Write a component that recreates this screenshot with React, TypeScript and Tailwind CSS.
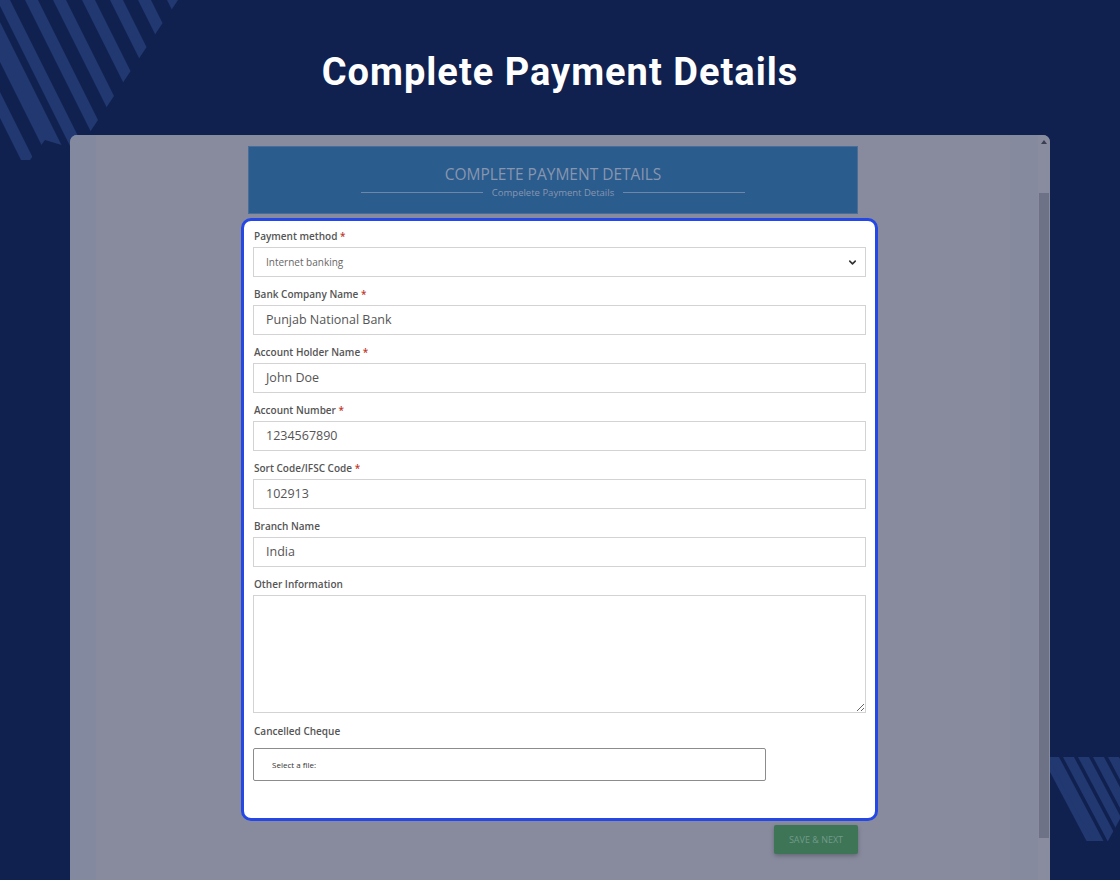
import React from "react";
import { ChevronDown } from "lucide-react";

const topLeftStripes = [-59, -31, -3, 25, 53, 82, 110, 138, 167, 195];
const bottomRightStripes = [-8, -2, 13, 28, 43, 58, 73];

function Stripes() {
  return (
    <>
      <svg
        className="absolute left-0 top-0"
        width="200"
        height="160"
        viewBox="0 0 200 160"
      >
        <defs>
          <clipPath id="tl-clip">
            <polygon points="0,0 178,0 78,150 45,140 30,160 0,160" />
          </clipPath>
        </defs>
        <g clipPath="url(#tl-clip)" fill="#213870">
          {topLeftStripes.map((x0, i) => {
            const w = i === 1 ? 20 : 13;
            return (
              <polygon
                key={x0}
                points={`${x0},0 ${x0 + w},0 ${x0 + w + 100},200 ${x0 + 100},200`}
              />
            );
          })}
        </g>
      </svg>
      <svg
        className="absolute left-[1050px] top-[757px]"
        width="70"
        height="90"
        viewBox="0 0 70 90"
      >
        <defs>
          <clipPath id="br-clip">
            <polygon points="0,0 70,0 70,62 58,84 0,84" />
          </clipPath>
        </defs>
        <g clipPath="url(#br-clip)" fill="#213870">
          {bottomRightStripes.map((x0, i) => {
            const w = i === 0 ? 14 : 11;
            return (
              <polygon
                key={x0}
                points={`${x0},0 ${x0 + w},0 ${x0 + w + 53},100 ${x0 + 53},100`}
              />
            );
          })}
        </g>
      </svg>
    </>
  );
}

function Label({ text, required }: { text: string; required?: boolean }) {
  return (
    <div className="h-[14px] pl-[1px] text-[10px] font-semibold leading-[14px] text-[#555]">
      {text}
      {required && <span className="text-[#c0392b]"> *</span>}
    </div>
  );
}

function TextField({
  label,
  value,
  required,
}: {
  label: string;
  value: string;
  required?: boolean;
}) {
  return (
    <div className="flex flex-col gap-[4px]">
      <Label text={label} required={required} />
      <div className="flex h-[30px] items-center border border-[#d3d3d3] bg-white pl-3 text-[12.5px] text-[#555]">
        {value}
      </div>
    </div>
  );
}

export default function App() {
  return (
    <div
      className="relative h-[880px] w-[1120px] overflow-hidden bg-[#10214f]"
      style={{ fontFamily: '"Open Sans", "Liberation Sans", sans-serif' }}
    >
      <Stripes />

      <div className="relative flex flex-col">
        <h1
          className="pt-[52px] text-center text-[38px] font-bold leading-[40px] tracking-[1px] text-white"
          style={{ fontFamily: 'Roboto, "Liberation Sans", sans-serif' }}
        >
          Complete Payment Details
        </h1>

        {/* page preview window */}
        <div className="mx-[70px] mt-[43px] flex h-[745px] overflow-hidden rounded-t-[7px] bg-[#878b9d]">
          <div className="w-[26px] bg-[#838aa0]" />

          <div className="flex flex-1 justify-center">
            <div className="flex w-[610px] flex-col pt-[11px]">
              {/* page heading banner */}
              <div className="flex h-[68px] flex-col items-center justify-center border border-[#4a6c98] bg-[#2b5c8e]">
                <div className="pt-[2px] text-[15.5px] leading-[20px] text-[#8796ae]">
                  COMPLETE PAYMENT DETAILS
                </div>
                <div className="mt-[3px] flex items-center gap-[9px]">
                  <div className="h-px w-[122px] bg-[#6f86a8]" />
                  <div className="text-[9.5px] leading-[12px] text-[#8796ae]">
                    Compelete Payment Details
                  </div>
                  <div className="h-px w-[122px] bg-[#6f86a8]" />
                </div>
              </div>

              {/* highlighted form card */}
              <div className="ml-[-7px] mr-[-20px] mt-[4px] flex flex-col gap-[10px] rounded-[10px] border-[3px] border-[#2447e6] bg-white px-[9px] pb-[37px] pt-[8px]">
                <div className="flex flex-col gap-[4px]">
                  <Label text="Payment method" required />
                  <div className="flex h-[30px] items-center justify-between border border-[#d3d3d3] bg-white pl-3 pr-[7px] text-[10px] text-[#666]">
                    <span>Internet banking</span>
                    <ChevronDown size={11} strokeWidth={3.5} color="#333" />
                  </div>
                </div>
                <TextField label="Bank Company Name" value="Punjab National Bank" required />
                <TextField label="Account Holder Name" value="John Doe" required />
                <TextField label="Account Number" value="1234567890" required />
                <TextField label="Sort Code/IFSC Code" value="102913" required />
                <TextField label="Branch Name" value="India" />
                <div className="flex flex-col gap-[4px]">
                  <Label text="Other Information" />
                  <textarea
                    readOnly
                    className="block h-[118px] w-full border border-[#d3d3d3] bg-white outline-none"
                  />
                </div>
                <div className="mt-[1px] flex flex-col gap-[10px]">
                  <Label text="Cancelled Cheque" />
                  <div className="flex h-[33px] w-[513px] items-center rounded-[2px] border border-[#8c8c8c] pl-[18px] text-[8px] text-[#333]">
                    Select a file:
                  </div>
                </div>
              </div>

              <div className="mt-[4px] flex justify-end">
                <div className="flex h-[29px] w-[84px] items-center justify-center rounded-[2px] bg-[#3d7556] text-[9px] text-[#729a8a] shadow-[0_2px_4px_rgba(0,0,0,0.25)]">
                  SAVE &amp; NEXT
                </div>
              </div>
            </div>
          </div>

          {/* right gutter with scrollbar */}
          <div className="flex w-[40px]">
            <div className="w-[28px] bg-[#858a9f]" />
            <div className="flex w-[12px] flex-col items-center bg-[#888c9e]">
              <svg width="8" height="6" viewBox="0 0 8 6" className="mt-[4px]">
                <polygon points="4,1 7,5 1,5" fill="#3a3f52" />
              </svg>
              <div className="mt-[48px] h-[645px] w-[10px] bg-[#6d7286]" />
            </div>
          </div>
        </div>
      </div>
    </div>
  );
}
